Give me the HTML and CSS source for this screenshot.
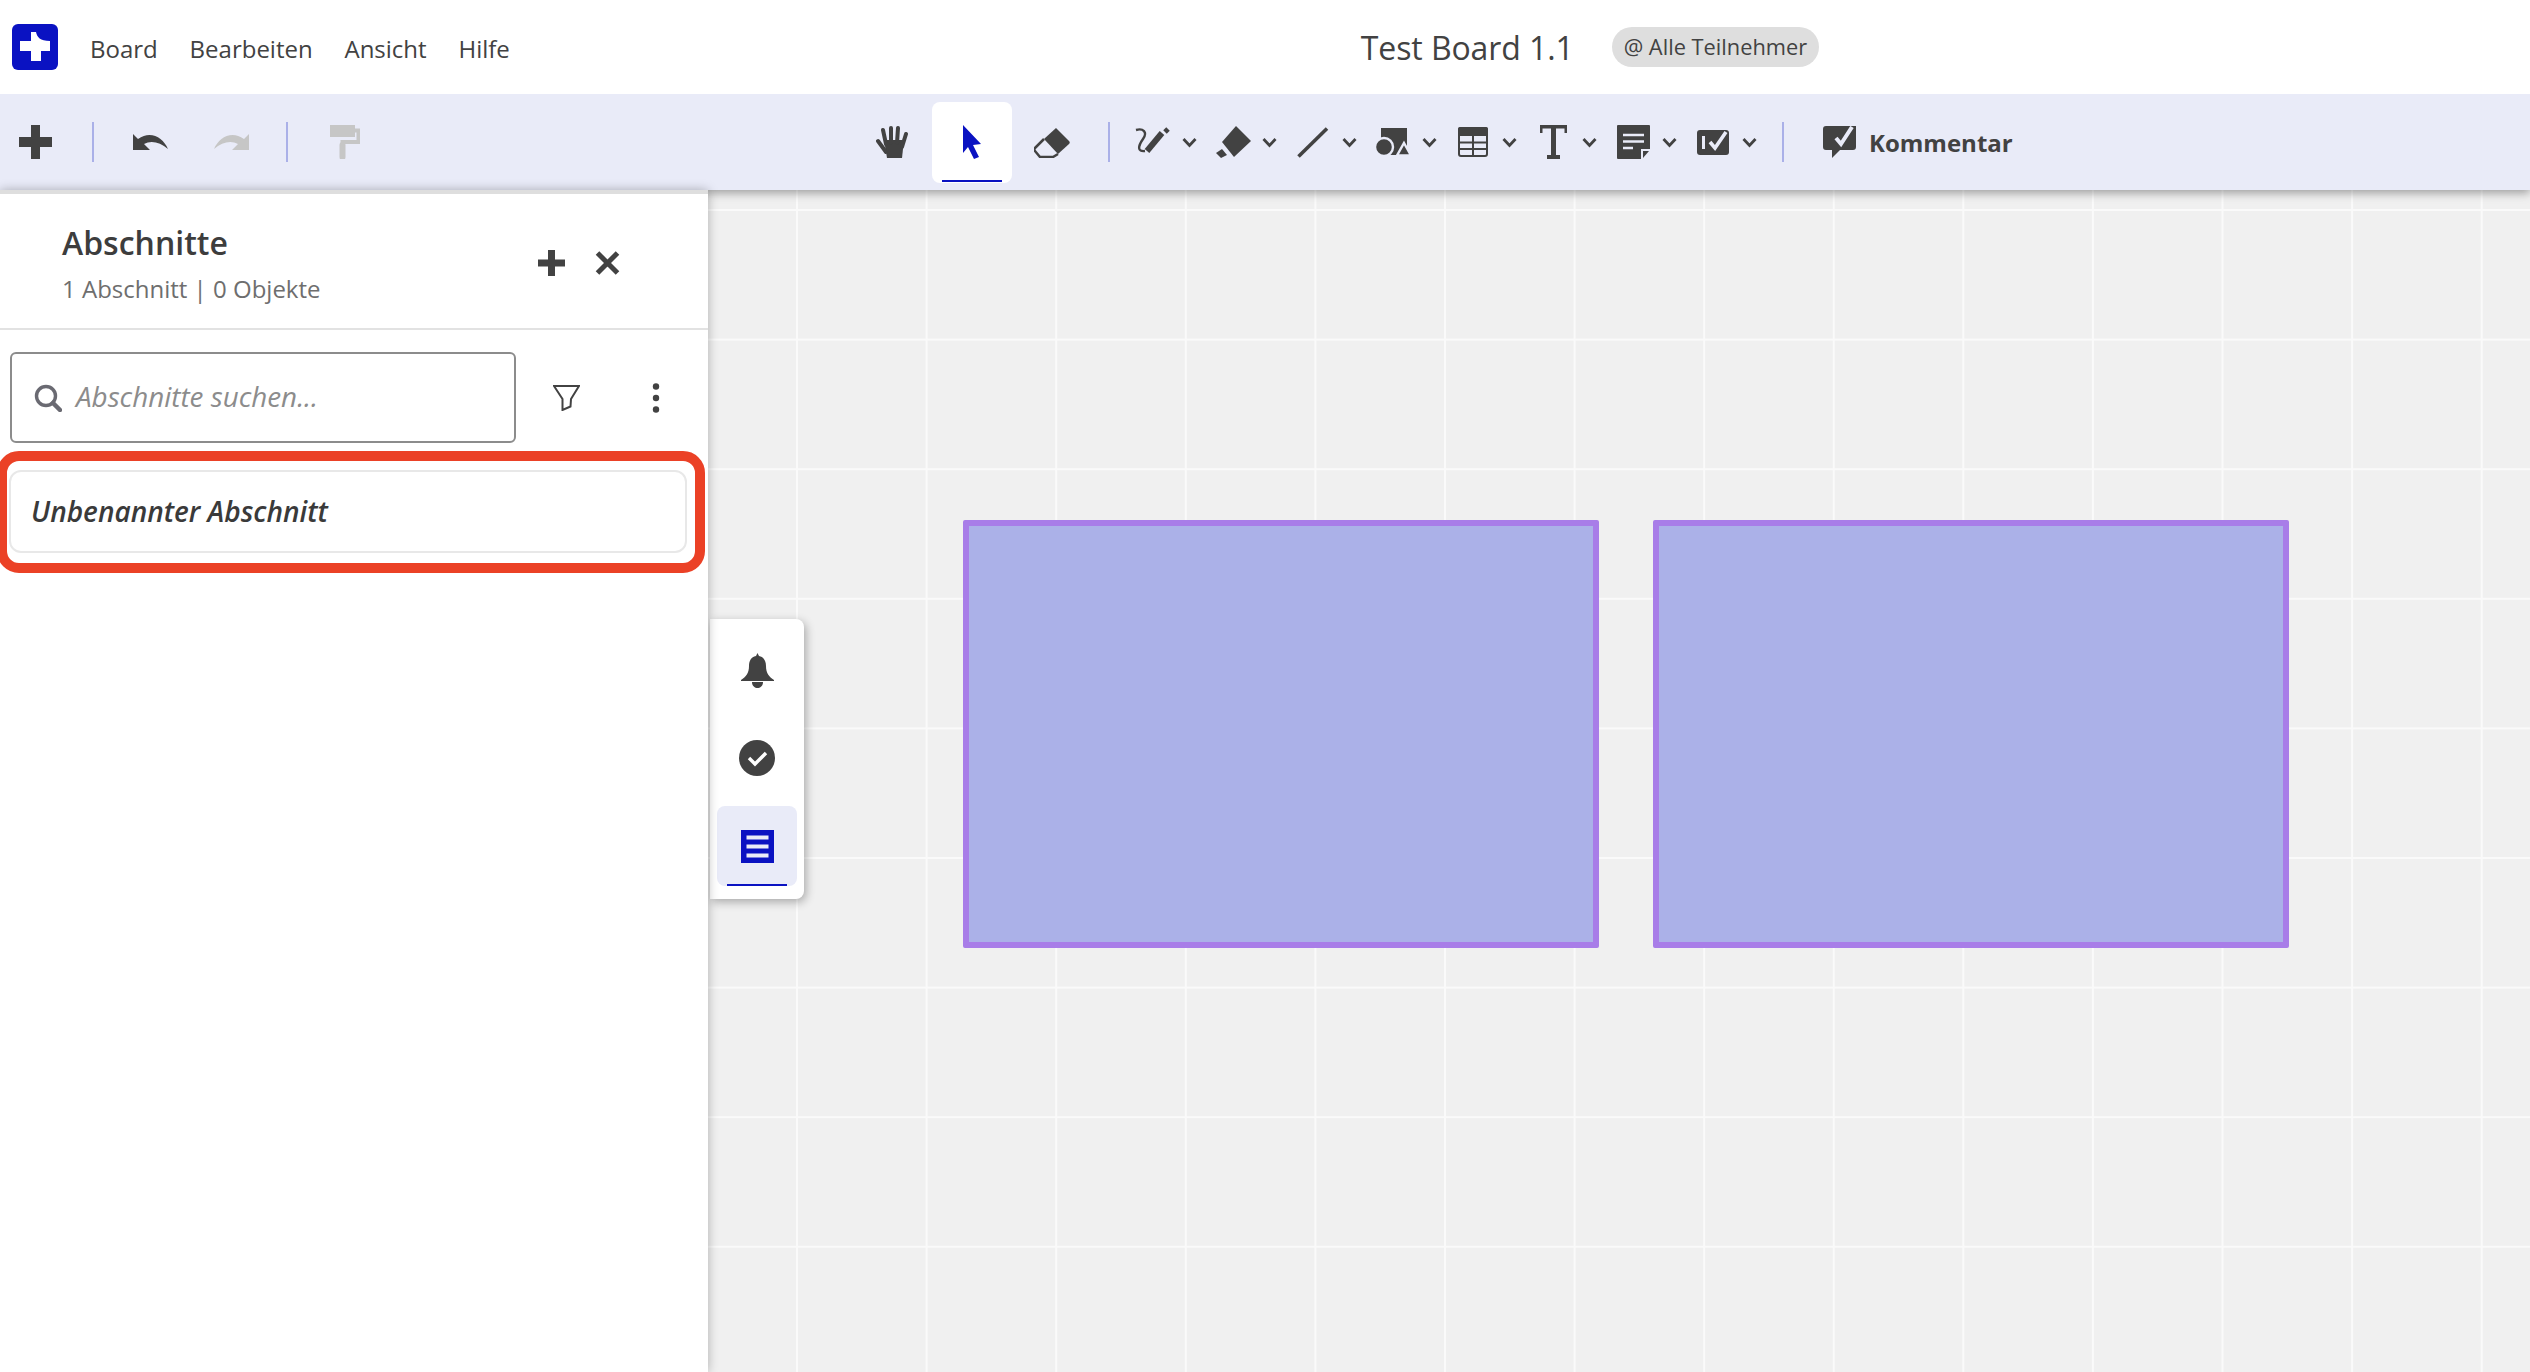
FILE: index.html
```html
<!DOCTYPE html>
<html lang="de">
<head>
<meta charset="utf-8">
<title>Test Board 1.1</title>
<link rel="stylesheet" href="styles.css">
</head>
<body>
<div class="app">
  <header class="topbar">
    <svg class="logo" viewBox="0 0 46 46"><rect width="46" height="46" rx="6" fill="#0a12c2"/><path d="M19 8h5c1 5 4 9 14 9v10H29v10H19V27H8V17h11z" fill="#fff"/></svg>
    <nav class="menu"><span>Board</span><span>Bearbeiten</span><span>Ansicht</span><span>Hilfe</span></nav>
    <div class="doc"><span class="doc-title">Test Board 1.1</span><span class="pill">@ Alle Teilnehmer</span></div>
  </header>

  <div class="toolbar">
    <div class="cell first"><svg width="33" height="34" viewBox="0 0 33 34"><path d="M12 0h9v12h12v10H21v12h-9V22H0V12h12z" fill="#424242"/></svg></div>
    <i class="sep s1"></i>
    <div class="cell undo"><svg width="35" height="18" viewBox="0 0 35 18"><path d="M0 1v16h17l-6-6c7-4 16-2 24 5C30 5 18-3 5 6z" fill="#424242"/></svg></div>
    <div class="cell"><svg width="35" height="18" viewBox="0 0 35 18"><path d="M35 1v16H18l6-6c-7-4-16-2-24 5C5 5 17-3 30 6z" fill="#c6c6c6"/></svg></div>
    <i class="sep s2"></i>
    <div class="cell roller"><svg width="30" height="34" viewBox="0 0 30 34"><path d="M0 0h25v12H0z" fill="#c6c6c6"/><path d="M25 5.500h3.500v11.500H12.500v15" fill="none" stroke="#c6c6c6" stroke-width="4" stroke-linecap="round"/><path d="M12.500 20v12" stroke="#c6c6c6" stroke-width="6" stroke-linecap="round"/></svg></div>

    <div class="cell hand"><svg width="33" height="32" viewBox="0 0 33 32"><path d="M8 14h20l-2 18H11z" fill="#424242"/><path d="M2 15l8 11M7 4l3 14M15 2v15M22 2l-1 15M30 8l-4 13" stroke="#424242" stroke-width="4" stroke-linecap="round"/></svg></div>
    <div class="cell active"><svg width="19" height="34" viewBox="0 0 19 34"><path d="M0 0l18 19-8 1 6 12-5 2-6-12-5 6z" fill="#0a12c2"/></svg></div>
    <div class="cell"><svg width="36" height="31" viewBox="0 0 36 31"><path d="M10 12L22 1l13 13c1 1 1 2 0 3l-11 10z" fill="#424242"/><path d="M10 12L1 21c-1 1-1 2 0 3l5 6h13l5-3" fill="none" stroke="#424242" stroke-width="2.500"/></svg></div>
    <i class="sep s3"></i>

    <div class="drop"><svg width="36" height="30" viewBox="0 0 36 30"><path d="M1 3c7-2 12 2 7 9S2 25 10 24" fill="none" stroke="#424242" stroke-width="2.400"/><path d="M12 24l15-18" stroke="#424242" stroke-width="6"/><path d="M30 5l3-3" stroke="#424242" stroke-width="5"/></svg><svg class="chev" viewBox="0 0 15 11"><path d="M1.500 2l6 6.500 6-6.500" fill="none" stroke="#424242" stroke-width="2.800"/></svg></div>
    <div class="drop"><svg width="35" height="32" viewBox="0 0 35 32"><path d="M20 0l15 15-17 16L6 16z" fill="#424242"/><path d="M0 27l6-4 5 6-6 3z" fill="#424242"/></svg><svg class="chev" viewBox="0 0 15 11"><path d="M1.500 2l6 6.500 6-6.500" fill="none" stroke="#424242" stroke-width="2.800"/></svg></div>
    <div class="drop"><svg width="32" height="31" viewBox="0 0 32 31"><path d="M1.500 29.500L30 1.500" stroke="#424242" stroke-width="3.600"/></svg><svg class="chev" viewBox="0 0 15 11"><path d="M1.500 2l6 6.500 6-6.500" fill="none" stroke="#424242" stroke-width="2.800"/></svg></div>
    <div class="drop"><svg width="36" height="28" viewBox="0 0 36 28"><rect x="6" y="0" width="26" height="27" fill="#424242"/><circle cx="9" cy="19" r="9" fill="#424242" stroke="#e9ebf8" stroke-width="2.400"/><path d="M29 15l7 12.500H22z" fill="#424242" stroke="#e9ebf8" stroke-width="2.400"/><path d="M0 27.500h36" stroke="#e9ebf8" stroke-width="1"/></svg><svg class="chev" viewBox="0 0 15 11"><path d="M1.500 2l6 6.500 6-6.500" fill="none" stroke="#424242" stroke-width="2.800"/></svg></div>
    <div class="drop"><svg width="30" height="30" viewBox="0 0 30 30"><rect x="1" y="1" width="28" height="28" rx="2" fill="none" stroke="#424242" stroke-width="2"/><path d="M0 2a2 2 0 0 1 2-2h26a2 2 0 0 1 2 2v7H0z" fill="#424242"/><path d="M1 15.500h28M1 22h28M15 9v20" stroke="#424242" stroke-width="2"/></svg><svg class="chev" viewBox="0 0 15 11"><path d="M1.500 2l6 6.500 6-6.500" fill="none" stroke="#424242" stroke-width="2.800"/></svg></div>
    <div class="drop"><svg width="27" height="34" viewBox="0 0 27 34"><path d="M0 0h27v8h-2.500V3.500H16V30h4v4H7v-4h4V3.500H2.500V8H0z" fill="#424242"/></svg><svg class="chev" viewBox="0 0 15 11"><path d="M1.500 2l6 6.500 6-6.500" fill="none" stroke="#424242" stroke-width="2.800"/></svg></div>
    <div class="drop"><svg width="33" height="34" viewBox="0 0 33 34"><path d="M1 0h31a1 1 0 0 1 1 1v23h-9v10H1a1 1 0 0 1-1-1V1a1 1 0 0 1 1-1z" fill="#424242"/><path d="M26 26h6l-6 7z" fill="#424242"/><path d="M6 10h21M6 16.500h21M6 23h10" stroke="#e9ebf8" stroke-width="2.600"/></svg><svg class="chev" viewBox="0 0 15 11"><path d="M1.500 2l6 6.500 6-6.500" fill="none" stroke="#424242" stroke-width="2.800"/></svg></div>
    <div class="drop"><svg width="33" height="25" viewBox="0 0 33 25"><rect width="32" height="25" y="0" rx="3" fill="#424242"/><path d="M6.500 6v13" stroke="#e9ebf8" stroke-width="3"/><path d="M13 12l5 6L29 2" fill="none" stroke="#e9ebf8" stroke-width="3.600"/></svg><svg class="chev" viewBox="0 0 15 11"><path d="M1.500 2l6 6.500 6-6.500" fill="none" stroke="#424242" stroke-width="2.800"/></svg></div>
    <i class="sep s4"></i>
    <div class="comment"><svg width="34" height="32" viewBox="0 0 34 32"><path d="M3 0h30v21a3 3 0 0 1-3 3H17l-8 8v-8H3a3 3 0 0 1-3-3V3a3 3 0 0 1 3-3z" fill="#424242"/><path d="M13 12l5 6L29 1" fill="none" stroke="#e9ebf8" stroke-width="4"/></svg><span>Kommentar</span></div>
  </div>

  <main class="workspace">
    <aside class="sidebar">
      <div class="side-head">
        <div class="side-titles"><h1>Abschnitte</h1><p>1 Abschnitt | 0 Objekte</p></div>
        <svg class="head-plus" width="27" height="26" viewBox="0 0 27 26"><path d="M10 0h7v9.500h10v7H17V26h-7v-9.500H0v-7h10z" fill="#424242"/></svg>
        <svg class="head-x" width="25" height="24" viewBox="0 0 25 24"><path d="M2.500 2l20 20M22.500 2l-20 20" stroke="#424242" stroke-width="5"/></svg>
      </div>
      <div class="search-row">
        <div class="search">
          <svg width="28" height="28" viewBox="0 0 28 28"><circle cx="12" cy="12" r="9.500" fill="none" stroke="#6a6a72" stroke-width="3.400"/><path d="M19 19l7 7" stroke="#6a6a72" stroke-width="4.500" stroke-linecap="round"/></svg>
          <span>Abschnitte suchen...</span>
        </div>
        <svg class="filter" width="27" height="26" viewBox="0 0 27 26"><path d="M1 1h25l-8 13-.5 7.500L9.500 25V14z" fill="none" stroke="#424242" stroke-width="2"/></svg>
        <svg class="dots" width="8" height="30" viewBox="0 0 8 30"><circle cx="4" cy="3.500" r="3.200" fill="#424242"/><circle cx="4" cy="15" r="3.200" fill="#424242"/><circle cx="4" cy="26.500" r="3.200" fill="#424242"/></svg>
      </div>
      <div class="list">
        <div class="card">Unbenannter Abschnitt</div>
        <div class="callout"></div>
      </div>
    </aside>

    <section class="canvas">
      <div class="shape s-a"></div>
      <div class="shape s-b"></div>
      <div class="dock">
        <div class="dock-btn"><svg width="33" height="36" viewBox="0 0 33 36"><path d="M16.500 0l1.500 3c5 1 7 5 7 10 0 7 3 11 8 14v1H0v-1c5-3 8-7 8-14 0-5 2-9 7-10z" fill="#424242"/><path d="M11 29h11c0 4-3 6-5.500 6S11 33 11 29z" fill="#424242"/></svg></div>
        <div class="dock-btn"><svg width="36" height="36" viewBox="0 0 36 36"><circle cx="18" cy="18" r="18" fill="#424242"/><path d="M10 18l6 6 11-11" fill="none" stroke="#fff" stroke-width="3.400"/></svg></div>
        <div class="dock-btn on"><svg width="33" height="33" viewBox="0 0 33 33"><rect width="33" height="33" fill="#0a12c2"/><path d="M5.500 7.500h22M5.500 16.500h22M5.500 25.500h22" stroke="#e9ebf8" stroke-width="4"/></svg></div>
      </div>
    </section>
  </main>
</div>
</body>
</html>
```
FILE: styles.css
```css
* { box-sizing: border-box; }
html, body { margin: 0; height: 100%; }
body { font-family: "Open Sans", "Noto Sans", sans-serif; color: #424242; overflow: hidden; background: #fff; }
.app { height: 100vh; display: flex; flex-direction: column; }

.topbar { height: 94px; flex: none; display: flex; align-items: center; background: #fff; position: relative; z-index: 2; }
.logo { width: 46px; height: 46px; margin-left: 12px; flex: none; }
.menu { display: flex; gap: 31.800px; margin-left: 32px; font-size: 24px; padding-top: 2px; }
.doc { display: flex; align-items: center; margin-left: 851px; }
.doc-title { font-size: 32px; letter-spacing: -.1px; }
.pill { margin-left: 38px; height: 40px; padding: 0 12px; border-radius: 20px; background: #dedede; font-size: 21.800px; line-height: 40px; }

.toolbar { height: 96px; flex: none; display: flex; align-items: center; background: #e9ebf8; box-shadow: 0 3px 9px rgba(0,0,0,.35); position: relative; z-index: 1; }
.cell { width: 80px; height: 81px; flex: none; display: flex; align-items: center; justify-content: center; position: relative; border-radius: 8px; }
.cell.first { width: 71px; }
.cell.undo { margin-left: 16px; margin-right: 1px; }
.cell.roller { margin-left: 27px; width: 60px; margin-right: 0; }
.cell.hand { margin-left: 477px; }
.cell.active { background: #fff; }
.cell.active::after { content: ""; position: absolute; left: 10px; right: 10px; bottom: 1px; height: 2px; background: #0a12c2; }
.sep { width: 2px; height: 40px; background: #aab0e8; flex: none; display: block; }
.s1 { margin-left: 21px; }
.s2 { margin-left: 15px; }
.s3 { margin-left: 16px; margin-right: 25px; }
.s4 { margin-left: 7px; margin-right: 39px; }
.drop { width: 80px; flex: none; display: grid; grid-template-columns: 36px 15px; column-gap: 11px; align-items: center; justify-items: center; }
.chev { width: 15px; height: 11px; }
.comment { display: flex; align-items: center; gap: 12px; font-size: 24px; font-weight: 700; }

.workspace { flex: 1; min-height: 0; display: flex; position: relative; }
.sidebar { width: 708px; flex: none; background: #fff; border-top: 4px solid #dedede; box-shadow: 0 0 10px rgba(0,0,0,.28); position: relative; z-index: 2; display: flex; flex-direction: column; }
.side-head { height: 136px; flex: none; display: flex; align-items: flex-start; padding-left: 62px; border-bottom: 2px solid #e2e2e2; }
.side-titles { flex: none; width: 476px; padding-top: 27px; }
.side-titles h1 { margin: 0; font-size: 32px; font-weight: 600; line-height: 44px; color: #3d3d3d; }
.side-titles p { margin: 7px 0 0; font-size: 24px; line-height: 33px; color: #6e6e6e; }
.head-plus { margin-top: 56px; flex: none; }
.head-x { margin: 57px 0 0 30px; flex: none; }

.search-row { display: flex; align-items: center; padding: 22px 0 0 10px; flex: none; }
.search { width: 506px; height: 91px; border: 2px solid #8c8c8c; border-radius: 6px; display: flex; align-items: center; padding-left: 22px; gap: 14px; }
.search span { font-size: 27.800px; font-style: italic; color: #8c8c8c; line-height: 34px; padding-bottom: 4px; }
.filter { margin-left: 37px; flex: none; }
.dots { margin-left: 72px; flex: none; }

.list { position: relative; padding: 27px 21px 0 9px; }
.card { height: 83px; border: 2px solid #e8e8e8; border-radius: 12px; padding-left: 20px; font-size: 28px; font-weight: 600; font-style: italic; line-height: 79px; color: #3a3a3a; }
.callout { position: absolute; left: -3px; top: 8px; width: 708px; height: 122px; border: 10px solid #eb4126; border-radius: 22px; }

.canvas { flex: 1; position: relative; background-color: #f0f0f0;
  background-image: linear-gradient(to right, #fafafa 2px, transparent 2px), linear-gradient(to bottom, #fafafa 2px, transparent 2px);
  background-size: 129.600px 129.600px; background-position: 88px 19px; }
.shape { position: absolute; top: 330px; width: 636px; height: 428px; background: #abb1e8; border: 6.500px solid #a87de8; border-radius: 2px; }
.s-a { left: 255px; }
.s-b { left: 945px; }
.dock { position: absolute; left: 2px; top: 429px; width: 94px; height: 280px; background: #fff; border-radius: 0 8px 8px 0; box-shadow: 2px 3px 10px rgba(0,0,0,.3); padding: 0 7px; display: flex; flex-direction: column; }
.dock-btn { height: 80px; flex: none; display: flex; align-items: center; justify-content: center; position: relative; border-radius: 8px; }
.dock-btn:nth-child(1) { height: 94px; padding-top: 10px; }
.dock-btn:nth-child(2) { height: 94px; padding-bottom: 4px; margin-bottom: -1px; }
.dock-btn.on { background: #e9ebf8; }
.dock-btn.on::after { content: ""; position: absolute; left: 10px; right: 10px; bottom: 0; height: 2px; background: #0a12c2; }
```
